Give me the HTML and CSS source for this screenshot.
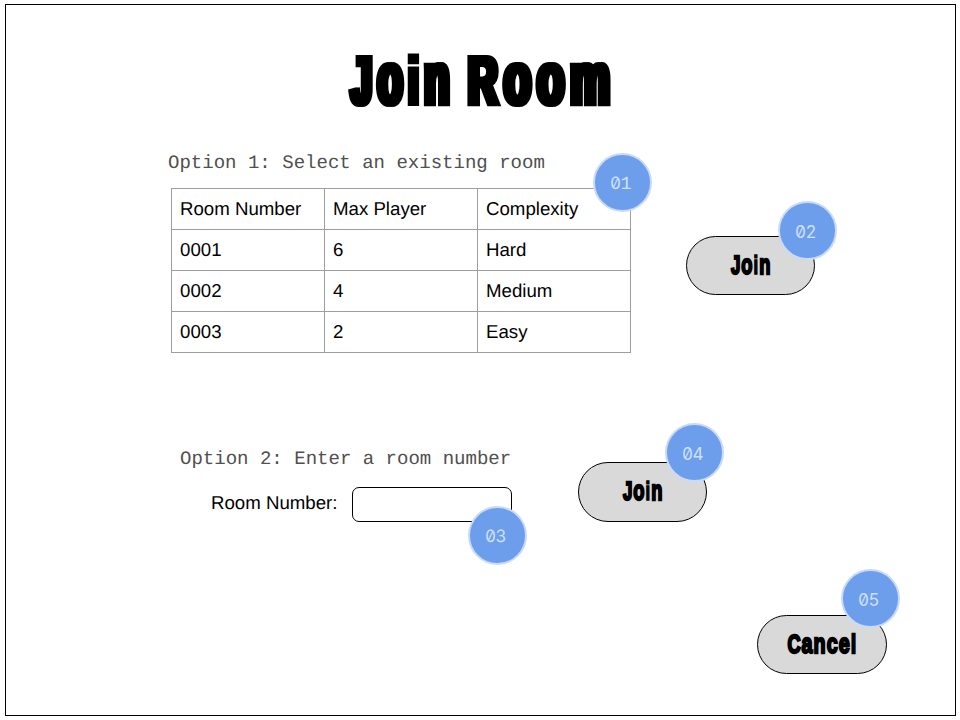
FILE: index.html
```html
<!DOCTYPE html>
<html lang="en">
<head>
<meta charset="utf-8">
<title>Join Room</title>
<link rel="stylesheet" href="styles.css">
</head>
<body>
<main class="frame">
  <h1 class="title">
    <svg class="art" width="270" height="90" viewBox="0 0 270 90">
      <filter id="widen" x="-5%" width="110%"><feMorphology operator="dilate" radius="2 0"/></filter>
      <g class="wide">
        <text class="display" x="5" y="56" textLength="104" lengthAdjust="spacingAndGlyphs">J<tspan class="low">o</tspan><tspan class="dotted">i</tspan><tspan class="low">n</tspan></text>
        <text class="display" x="122" y="56" textLength="148" lengthAdjust="spacingAndGlyphs">R<tspan class="low">oom</tspan></text>
      </g>
    </svg>
  </h1>
  <section class="existing">
    <div class="existing-rooms">
      <h2 class="option">Option 1: Select an existing room</h2>
      <div class="table-wrap">
        <table class="rooms">
          <tr><td>Room Number</td><td>Max Player</td><td>Complexity</td></tr>
          <tr><td>0001</td><td>6</td><td>Hard</td></tr>
          <tr><td>0002</td><td>4</td><td>Medium</td></tr>
          <tr><td>0003</td><td>2</td><td>Easy</td></tr>
        </table>
        <span class="badge badge-table">0<span class="one">1</span></span>
      </div>
    </div>
    <button class="pill pill-select">
      <svg class="art" width="60" height="40" viewBox="0 0 156 104"><text class="display small" x="26" y="72" textLength="105" lengthAdjust="spacingAndGlyphs">J<tspan class="low">o</tspan><tspan class="dotted">i</tspan><tspan class="low">n</tspan></text></svg>
      <span class="badge badge-select">02</span>
    </button>
  </section>
  <section class="enter">
    <div class="enter-form">
      <h2 class="option">Option 2: Enter a room number</h2>
      <div class="field">
        <label for="room">Room Number:</label>
        <div class="input-wrap">
          <input id="room" class="input" type="text">
          <span class="badge badge-input">03</span>
        </div>
      </div>
    </div>
    <button class="pill pill-enter">
      <svg class="art" width="60" height="40" viewBox="0 0 156 104"><text class="display small" x="26" y="72" textLength="105" lengthAdjust="spacingAndGlyphs">J<tspan class="low">o</tspan><tspan class="dotted">i</tspan><tspan class="low">n</tspan></text></svg>
      <span class="badge badge-enter">04</span>
    </button>
  </section>
  <footer class="actions">
    <button class="pill pill-cancel">
      <svg class="art" width="90" height="40" viewBox="0 0 234 104"><text class="display small" x="27" y="72" textLength="181" lengthAdjust="spacingAndGlyphs">C<tspan class="low">ance</tspan>l</text></svg>
      <span class="badge badge-cancel">05</span>
    </button>
  </footer>
</main>
</body>
</html>
```

FILE: styles.css
```css
* { box-sizing: border-box; }
body { margin: 0; background: #fff; color: #000; font-family: "Liberation Sans", Arial, sans-serif; font-size: 18.67px; text-rendering: geometricPrecision; }
.frame { width: 951px; height: 712px; margin: 4px 0 0 5px; border: 1px solid #000; display: flow-root; }
.title { margin: 43px 0 0; height: 90px; display: flex; justify-content: center; }
.art { display: block; overflow: visible; }
.wide { filter: url(#widen); }
.display { font-family: "Liberation Sans", Arial, sans-serif; font-size: 68px; font-weight: 700; letter-spacing: 10px; fill: #000; stroke: #000; stroke-width: 4.5px; }
.low { font-size: 74px; }
.dotted { font-size: 67px; stroke-width: 4px; }
.small { letter-spacing: 4px; stroke-width: 6px; }
.existing { display: flex; margin: 15px 0 0 162px; }
.existing-rooms { width: 463px; }
.option { margin: 0; height: 20px; font: 400 19.05px/20px "Liberation Mono", monospace; color: #505050; white-space: nowrap; }
.table-wrap { position: relative; width: 460px; margin: 15px 0 0 3px; }
.rooms { width: 460px; table-layout: fixed; border-collapse: collapse; }
.rooms td { height: 41px; padding: 0 8px; border: 1px solid #9e9e9e; line-height: 22px; }
.pill { position: relative; width: 129px; height: 59px; padding: 0; border: 1px solid #000; border-radius: 30px; background: #d9d9d9; display: flex; align-items: center; justify-content: center; flex: none; }
.pill-select { margin: 83px 0 0 55px; }
.badge { position: absolute; width: 59px; height: 59px; border: 2px solid #c9daf8; border-radius: 50%; background: #6d9eeb; color: #cfe0fb; font: 400 17px/58px Inter, sans-serif; font-feature-settings: "zero", "tnum"; letter-spacing: -0.6px; text-align: center; padding-right: 4px; }
.one { font-family: "Liberation Mono", monospace; font-size: 18.5px; }
.badge-table { left: 422px; top: -35px; }
.badge-select { left: 91px; top: -36px; }
.enter { display: flex; margin: 96px 0 0 174px; }
.enter-form { width: 332px; }
.field { display: flex; align-items: center; margin: 18px 0 0 31px; height: 35px; }
.field label { width: 141px; line-height: 22px; margin-top: -3px; }
.input-wrap { position: relative; flex: none; }
.input { display: block; width: 160px; height: 35px; border: 1px solid #000; border-radius: 7px; background: #fff; }
.badge-input { left: 116px; top: 19px; }
.pill-enter { height: 60px; margin: 13px 0 0 66px; }
.badge-enter { left: 86px; top: -40px; }
.actions { display: flex; justify-content: flex-end; margin: 93px 68px 0 0; }
.pill-cancel { width: 130px; }
.badge-cancel { left: 83px; top: -47px; }
```
